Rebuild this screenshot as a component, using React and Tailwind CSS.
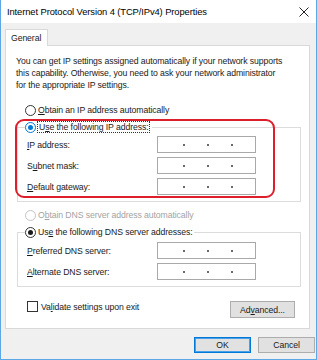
import React from "react";

const font = { fontFamily: '"Liberation Sans", Arial, sans-serif' };

function Radio({ state }) {
  if (state === "blue")
    return (
      <span className="w-[11px] h-[11px] rounded-full border border-[#0078d7] bg-white flex items-center justify-center shrink-0">
        <span className="w-[5px] h-[5px] rounded-full bg-[#0078d7]" />
      </span>
    );
  if (state === "on")
    return (
      <span className="w-[11px] h-[11px] rounded-full border border-[#333] bg-white flex items-center justify-center shrink-0">
        <span className="w-[5px] h-[5px] rounded-full bg-[#1a1a1a]" />
      </span>
    );
  if (state === "disabled")
    return <span className="w-[11px] h-[11px] rounded-full border border-[#c4c4c4] bg-white shrink-0" />;
  return <span className="w-[11px] h-[11px] rounded-full border border-[#333] bg-white shrink-0" />;
}

function IpBox() {
  return (
    <div className="w-[99px] h-[17px] border border-[#a9a9a9] bg-white flex items-center">
      <span className="ml-[25px] w-[2px] h-[2px] bg-[#6a6a6a]" />
      <span className="ml-[22px] w-[2px] h-[2px] bg-[#6a6a6a]" />
      <span className="ml-[22px] w-[2px] h-[2px] bg-[#6a6a6a]" />
    </div>
  );
}

function FieldRow({ label }) {
  return (
    <div className="flex items-center h-[17px]">
      <div className="w-[139px] pl-[9px] whitespace-nowrap">{label}</div>
      <IpBox />
    </div>
  );
}

function U({ children }) {
  return <span className="underline underline-offset-[1px]">{children}</span>;
}

export default function App() {
  return (
    <div
      style={font}
      className="w-[317px] h-[360px] bg-[#f0f0f0] border-x border-b border-[#5ca7e6] flex flex-col text-[8.7px] tracking-[-0.1px] text-[#1a1a1a] leading-[12px]"
    >
      {/* Title bar */}
      <div className="h-[23px] bg-white flex items-center justify-between pl-[6px] pr-[6px] shrink-0">
        <span className="text-[9.4px] tracking-[-0.1px] text-black whitespace-nowrap">
          Internet Protocol Version 4 (TCP/IPv4) Properties
        </span>
        <svg width="10" height="10" viewBox="0 0 10 10" className="mr-[1px]">
          <path d="M0.5 0.5 L9.5 9.5 M9.5 0.5 L0.5 9.5" stroke="#222" strokeWidth="1" />
        </svg>
      </div>

      <div className="pt-[6px] pl-[4px] flex flex-col">
        {/* Tab */}
        <div className="relative z-10 w-[43px] h-[17px] bg-white border-t border-x border-[#d9d9d9] flex items-center pl-[5px] -mb-[1px]">
          General
        </div>
        {/* Panel */}
        <div className="relative w-[305px] h-[284px] bg-white border border-[#d9d9d9] flex flex-col">
          <p className="pt-[9px] pl-[10px] whitespace-nowrap leading-[12px]">
            You can get IP settings assigned automatically if your network supports
            <br />
            this capability. Otherwise, you need to ask your network administrator
            <br />
            for the appropriate IP settings.
          </p>

          <div className="mt-[13px] h-[12px] flex items-center pl-[19px] gap-[1px]">
            <Radio state="off" />
            <span className="ml-[1px]">
              <U>O</U>btain an IP address automatically
            </span>
          </div>

          {/* IP group */}
          <div className="relative mt-[11px] ml-[11px] w-[284px] h-[75px] border border-[#dcdcdc]">
            <div className="absolute left-[7px] -top-[7px] h-[12px] flex items-center bg-white pr-[2px]">
              <Radio state="blue" />
              <span className="ml-[1px] px-[1px] border border-dotted border-[#333] leading-[10px]">
                U<U>s</U>e the following IP address:
              </span>
            </div>
            <div className="pt-[8px] flex flex-col gap-[4px]">
              <FieldRow label={<><U>I</U>P address:</>} />
              <FieldRow label={<>S<U>u</U>bnet mask:</>} />
              <FieldRow label={<><U>D</U>efault gateway:</>} />
            </div>
          </div>

          <div className="mt-[7px] h-[12px] flex items-center pl-[19px] text-[#a3a3a3]">
            <Radio state="disabled" />
            <span className="ml-[2px]">
              O<U>b</U>tain DNS server address automatically
            </span>
          </div>

          {/* DNS group */}
          <div className="relative mt-[11px] ml-[11px] w-[284px] h-[55px] border border-[#dcdcdc]">
            <div className="absolute left-[7px] -top-[7px] h-[12px] flex items-center bg-white pr-[2px]">
              <Radio state="on" />
              <span className="ml-[2px]">
                Us<U>e</U> the following DNS server addresses:
              </span>
            </div>
            <div className="pt-[9px] flex flex-col gap-[4px]">
              <FieldRow label={<><U>P</U>referred DNS server:</>} />
              <FieldRow label={<><U>A</U>lternate DNS server:</>} />
            </div>
          </div>

          <div className="mt-[14px] flex justify-between pl-[21px] pr-[14px]">
            <div className="flex items-center h-[11px] mt-[0px]">
              <span className="w-[11px] h-[11px] border border-[#333] bg-white shrink-0" />
              <span className="ml-[3px]">
                Va<U>l</U>idate settings upon exit
              </span>
            </div>
            <div className="w-[65px] h-[17px] bg-[#e1e1e1] border border-[#adadad] flex items-center justify-center">
              Ad<U>v</U>anced...
            </div>
          </div>

          {/* Red annotation */}
          <div className="absolute left-[9px] top-[73px] w-[260px] h-[79px] rounded-[9px] border-2 border-[#dc1f2b] pointer-events-none" />
        </div>

        {/* Buttons */}
        <div className="mt-[8px] flex justify-end gap-[7px] pr-[1px]">
          <div className="w-[57px] h-[16px] bg-[#e1e1e1] border border-[#0078d7] shadow-[inset_0_0_0_1px_#4aa0e6] flex items-center justify-center">
            OK
          </div>
          <div className="w-[57px] h-[16px] bg-[#e1e1e1] border border-[#adadad] flex items-center justify-center">
            Cancel
          </div>
        </div>
      </div>
    </div>
  );
}
